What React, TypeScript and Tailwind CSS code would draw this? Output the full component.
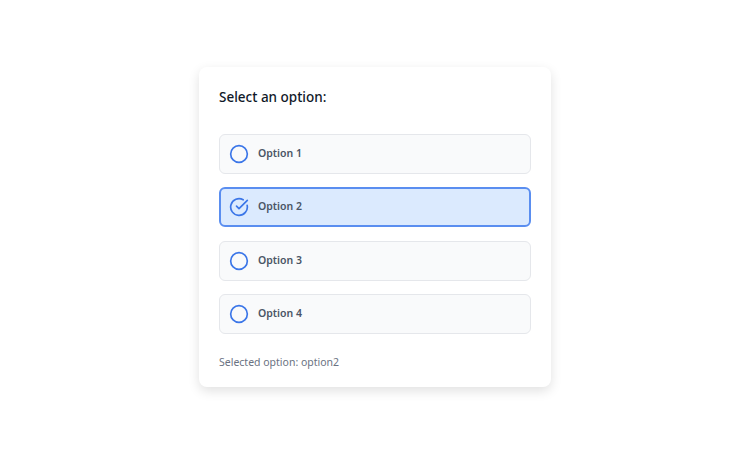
import React, { useState } from 'react';
import { Circle, CircleCheckBig } from 'lucide-react';

const options = [
  { id: 'option1', label: 'Option 1' },
  { id: 'option2', label: 'Option 2' },
  { id: 'option3', label: 'Option 3' },
  { id: 'option4', label: 'Option 4' },
];

const App: React.FC = () => {
  const [selected, setSelected] = useState('option2');

  return (
    <div className="min-h-screen bg-white flex justify-center pt-[67px] font-['Noto_Sans','Liberation_Sans',sans-serif]">
      <div className="w-[352px] h-[320px] bg-white rounded-lg shadow-[0_4px_12px_rgba(0,0,0,0.12)] px-5 pt-[20px]">
        <h2 className="text-[13.5px] leading-5 font-medium text-gray-900 mb-[27px]">Select an option:</h2>

        <div className="flex flex-col gap-[13.33px]">
          {options.map((opt) => {
            const isSelected = selected === opt.id;
            return (
              <button
                key={opt.id}
                onClick={() => setSelected(opt.id)}
                className={`h-10 w-full flex items-center gap-[9px] rounded-md text-left ${
                  isSelected
                    ? 'bg-blue-100 border-2 border-[#5a8ef0] px-[8px]'
                    : 'bg-gray-50 border border-gray-200 px-[9px]'
                }`}
              >
                {isSelected ? (
                  <CircleCheckBig size={20} className="text-[#3b76e8]" />
                ) : (
                  <Circle size={20} className="text-[#3b76e8]" />
                )}
                <span className="text-[10.5px] font-semibold text-gray-600">{opt.label}</span>
              </button>
            );
          })}
        </div>

        <p className="mt-[21px] text-[10.5px] text-gray-500">Selected option: {selected}</p>
      </div>
    </div>
  );
};

export default App;
